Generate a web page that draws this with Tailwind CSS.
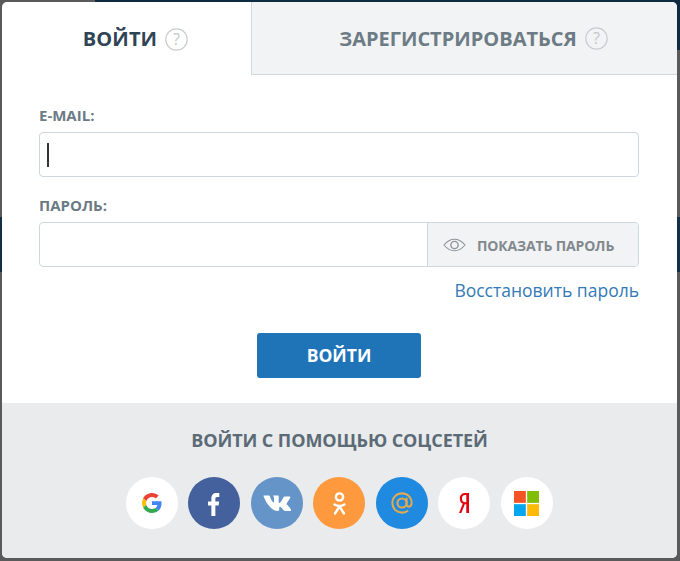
<!DOCTYPE html>
<html lang="ru">
<head>
<meta charset="utf-8">
<script src="https://cdn.jsdelivr.net/npm/@tailwindcss/browser@4"></script>
</head>
<body class="relative w-[680px] h-[561px] overflow-hidden bg-[#5a5a5a] font-['Open_Sans',sans-serif]">
  <div class="absolute left-[95px] right-0 top-0 h-[50px] bg-[#0f2b3f]"></div>
  <div class="absolute left-0 right-0 top-[217px] h-[55px] bg-[#123048]"></div>
  <main class="relative ml-[2px] mt-[2px] w-[675px] h-[556px] bg-white rounded-[5px] overflow-hidden flex flex-col">
    <div class="flex h-[73px] shrink-0">
      <div class="w-[249px] flex items-center justify-center gap-[8px] pt-[1px] pl-[18px]">
        <span class="text-[20px] leading-none font-bold text-[#2f4454] tracking-[0.1px]">ВОЙТИ</span>
        <svg class="w-[23px] h-[23px]" viewBox="0 0 23 23"><circle cx="11.5" cy="11.5" r="10.7" fill="none" stroke="#c9cccf" stroke-width="1.2"/><text x="11.5" y="17" text-anchor="middle" font-size="16" fill="#c4c7ca" font-family="Open Sans">?</text></svg>
      </div>
      <div class="flex-1 flex items-center justify-center gap-[8px] pt-[1px] pl-[18px] bg-[#f1f3f4] border-l border-b border-[#d3d8dc]">
        <span class="text-[20px] leading-none font-bold text-[#6d7b85]">ЗАРЕГИСТРИРОВАТЬСЯ</span>
        <svg class="w-[23px] h-[23px]" viewBox="0 0 23 23"><circle cx="11.5" cy="11.5" r="10.7" fill="none" stroke="#c9cccf" stroke-width="1.2"/><text x="11.5" y="17" text-anchor="middle" font-size="16" fill="#c4c7ca" font-family="Open Sans">?</text></svg>
      </div>
    </div>
    <div class="flex-1 flex flex-col pl-[37px] pr-[38px]">
      <label class="mt-[31px] h-[19px] text-[15px] leading-[19px] font-bold text-[#6b7a85]">E-MAIL:</label>
      <div class="mt-[7px] h-[45px] w-[600px] border border-[#ccd7e0] rounded-[4px] flex items-center pl-[7px]">
        <span class="w-[1.5px] h-[24px] bg-[#333]"></span>
      </div>
      <label class="mt-[19px] h-[19px] text-[15px] leading-[19px] font-bold text-[#6b7a85]">ПАРОЛЬ:</label>
      <div class="mt-[7px] h-[45px] w-[600px] border border-[#ccd7e0] rounded-[4px] flex overflow-hidden">
        <div class="flex-1"></div>
        <div class="w-[211px] bg-[#f1f3f4] border-l border-[#ccd7e0] flex items-center pl-[15px] gap-[11px]">
          <svg class="w-[23px] h-[14px]" viewBox="0 0 24 14" fill="none" stroke="#8d9499" stroke-width="1.1"><path d="M1 7C4.5 2.8 8 1 12 1s7.5 1.8 11 6c-3.500 4.200-7 6-11 6S4.500 11.200 1 7z"/><circle cx="12" cy="7" r="3.800" stroke-width="1.500"/></svg>
          <span class="pt-[2px] text-[14px] leading-none font-bold text-[#82898e] tracking-[-0.15px]">ПОКАЗАТЬ ПАРОЛЬ</span>
        </div>
      </div>
      <a class="mt-[12px] w-[600px] text-right text-[17.5px] leading-[23px] text-[#337ab7]">Восстановить пароль</a>
      <button class="mt-[31px] self-center w-[164px] h-[45px] rounded-[3px] bg-[#1f74b8] text-white text-[17.5px] font-bold leading-none">ВОЙТИ</button>
    </div>
    <div class="h-[155px] shrink-0 bg-[#e9ebed] flex flex-col items-center">
      <div class="mt-[26px] h-[23px] text-[18px] leading-[23px] font-bold text-[#5b6a75] tracking-[-0.08px]">ВОЙТИ С ПОМОЩЬЮ СОЦСЕТЕЙ</div>
      <div class="mt-[25px] mr-[0.5px] flex gap-[10.5px]">
        <a class="w-[52px] h-[52px] rounded-full bg-white flex items-center justify-center">
          <svg class="w-[20px] h-[20px]" viewBox="0 0 48 48"><path fill="#EA4335" d="M24 9.500c3.500 0 6.700 1.300 9.100 3.500l6.800-6.800C35.800 2.400 30.200 0 24 0 14.600 0 6.500 5.400 2.600 13.200l7.900 6.200C12.400 13.700 17.700 9.500 24 9.500z"/><path fill="#4285F4" d="M46.900 24.500c0-1.600-.1-3.100-.4-4.500H24v9h12.900c-.6 3-2.200 5.500-4.800 7.200l7.700 6c4.500-4.200 7.100-10.300 7.100-17.700z"/><path fill="#FBBC05" d="M10.500 28.600c-.5-1.400-.8-3-.8-4.600s.3-3.200.8-4.600l-7.900-6.200C.9 16.500 0 20.100 0 24s.9 7.500 2.600 10.800l7.900-6.200z"/><path fill="#34A853" d="M24 48c6.500 0 11.900-2.100 15.900-5.800l-7.700-6c-2.200 1.500-4.900 2.300-8.200 2.300-6.300 0-11.600-4.200-13.500-9.900l-7.900 6.200C6.500 42.600 14.600 48 24 48z"/></svg>
        </a>
        <a class="w-[52px] h-[52px] rounded-full bg-[#45619d] flex items-center justify-center">
          <svg class="w-[12px] h-[23px] mt-[2px]" viewBox="0 0 16 29" preserveAspectRatio="none"><path fill="#fff" d="M4.500 29V15.800H0v-5.200h4.500V7C4.500 2.500 7.100 0 11.100 0c1.900 0 3.500.1 4 .2v4.700h-2.700c-2.200 0-2.600 1-2.600 2.500v3.200h5.100l-.7 5.200H9.800V29z"/></svg>
        </a>
        <a class="w-[52px] h-[52px] rounded-full bg-[#6594c8] flex items-center justify-center">
          <svg class="w-[28px] h-[17px]" viewBox="0 0 28 17"><path fill="#fff" d="M1 0.500h5c.4 0 .6.200.8.700C8 4.700 9.500 7 10.500 7.500c.4 0 .5-.3.500-1.100V2.700c-.1-1.200-.7-1.400-1-1.900 0-.2.200-.3.500-.3H15c.5 0 .7.200.7.800v6c0 .5.200.7.400.7.500 0 1.200-.5 2.300-2 1.300-1.800 2.300-3.900 2.300-3.900.2-.4.500-.6 1-.6h5c.6 0 .7.300.6.800-.3 1.500-3.500 6-3.500 6-.3.500-.4.700 0 1.200.3.400 1.300 1.200 2 2.100 1.200 1.300 2 2.400 2.200 3.100.2.800-.2 1.200-1 1.200H22c-.7 0-1-.3-2-1.400-1-1-1.600-1.900-2.500-2.500-.8-.400-1.300-.2-1.300.9v2.100c0 .6-.2.900-1.600.9-2.600 0-5.300-1.200-7.500-4C4 9.300 2 5 .6 1.300.4.800.5.500 1 .500z"/></svg>
        </a>
        <a class="w-[52px] h-[52px] rounded-full bg-[#fe9a3d] flex items-center justify-center">
          <svg class="w-[13px] h-[23px]" viewBox="0 0 13 23" fill="none" stroke="#fff" stroke-width="2.400" stroke-linecap="round"><circle cx="6.500" cy="5" r="3.600"/><path d="M1.500 12.500c3 1.800 7 1.800 10 0M6.500 14.500l-4.500 7M6.500 14.500l4.500 7"/></svg>
        </a>
        <a class="w-[52px] h-[52px] rounded-full bg-[#1f8ae0] flex items-center justify-center">
          <svg class="w-[22px] h-[22px] -mt-[1px]" viewBox="0 0 24 24" fill="none" stroke="#e2a94f" stroke-width="2.200"><circle cx="12" cy="12" r="5"/><path d="M17 7v6.500c0 3.500 5.500 3.500 5.500-1.500C22.500 6 18 1.500 12 1.500S1.500 6 1.500 12 6 22.500 12 22.500c2.500 0 4.500-.7 6-1.800" stroke-linecap="round"/></svg>
        </a>
        <a class="w-[52px] h-[52px] rounded-full bg-white flex items-center justify-center">
          <svg class="w-[10px] h-[20px] -mt-[1px]" viewBox="0 0 10 20"><path fill="#e3000f" fill-rule="evenodd" d="M10 0H6.500C3 0 .8 2 .8 5.400c0 2.600 1.100 4.200 3 5.400L0 20h2.300l3.500-8.700h1.500V20H10zM7.300 9.300H6.300C4 9.300 3 7.800 3 5.300 3 2.800 4.300 2 6.300 2h1z"/></svg>
        </a>
        <a class="w-[52px] h-[52px] rounded-full bg-white flex items-center justify-center">
          <svg class="w-[25px] h-[25px]" viewBox="0 0 26 26"><rect width="12.300" height="12.300" fill="#f35325"/><rect x="13.700" width="12.300" height="12.300" fill="#81bc06"/><rect y="13.700" width="12.300" height="12.300" fill="#05a6f0"/><rect x="13.700" y="13.700" width="12.300" height="12.300" fill="#ffba08"/></svg>
        </a>
      </div>
    </div>
  </main>
</body>
</html>
